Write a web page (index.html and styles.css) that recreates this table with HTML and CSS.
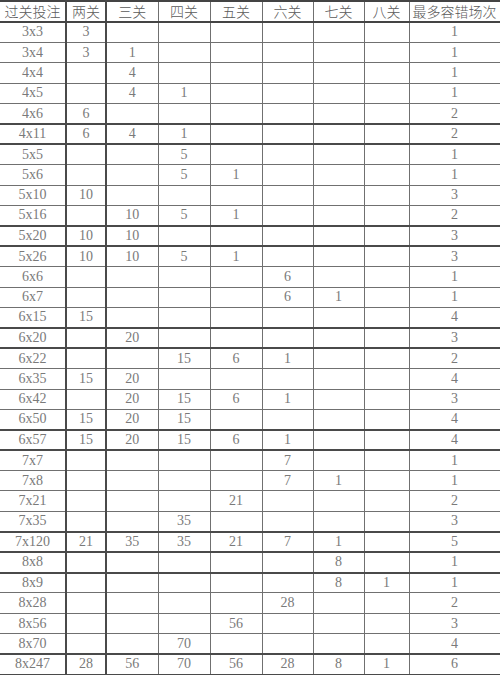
FILE: index.html
```html
<!DOCTYPE html>
<html lang="zh">
<head>
<meta charset="utf-8">
<title>过关投注</title>
<link rel="stylesheet" href="styles.css">
</head>
<body>
<table class="grid">
<colgroup>
<col class="c0"><col class="c1"><col class="c2"><col class="c3"><col class="c4"><col class="c5"><col class="c6"><col class="c7"><col class="c8">
</colgroup>
<thead>
<tr class="head"><th>过关投注</th><th>两关</th><th>三关</th><th>四关</th><th>五关</th><th>六关</th><th>七关</th><th>八关</th><th>最多容错场次</th></tr>
</thead>
<tbody>
<tr><td>3x3</td><td>3</td><td></td><td></td><td></td><td></td><td></td><td></td><td>1</td></tr>
<tr><td>3x4</td><td>3</td><td>1</td><td></td><td></td><td></td><td></td><td></td><td>1</td></tr>
<tr><td>4x4</td><td></td><td>4</td><td></td><td></td><td></td><td></td><td></td><td>1</td></tr>
<tr><td>4x5</td><td></td><td>4</td><td>1</td><td></td><td></td><td></td><td></td><td>1</td></tr>
<tr><td>4x6</td><td>6</td><td></td><td></td><td></td><td></td><td></td><td></td><td>2</td></tr>
<tr class="thick"><td>4x11</td><td>6</td><td>4</td><td>1</td><td></td><td></td><td></td><td></td><td>2</td></tr>
<tr><td>5x5</td><td></td><td></td><td>5</td><td></td><td></td><td></td><td></td><td>1</td></tr>
<tr><td>5x6</td><td></td><td></td><td>5</td><td>1</td><td></td><td></td><td></td><td>1</td></tr>
<tr><td>5x10</td><td>10</td><td></td><td></td><td></td><td></td><td></td><td></td><td>3</td></tr>
<tr><td>5x16</td><td></td><td>10</td><td>5</td><td>1</td><td></td><td></td><td></td><td>2</td></tr>
<tr class="thick"><td>5x20</td><td>10</td><td>10</td><td></td><td></td><td></td><td></td><td></td><td>3</td></tr>
<tr><td>5x26</td><td>10</td><td>10</td><td>5</td><td>1</td><td></td><td></td><td></td><td>3</td></tr>
<tr><td>6x6</td><td></td><td></td><td></td><td></td><td>6</td><td></td><td></td><td>1</td></tr>
<tr><td>6x7</td><td></td><td></td><td></td><td></td><td>6</td><td>1</td><td></td><td>1</td></tr>
<tr><td>6x15</td><td>15</td><td></td><td></td><td></td><td></td><td></td><td></td><td>4</td></tr>
<tr class="thick"><td>6x20</td><td></td><td>20</td><td></td><td></td><td></td><td></td><td></td><td>3</td></tr>
<tr><td>6x22</td><td></td><td></td><td>15</td><td>6</td><td>1</td><td></td><td></td><td>2</td></tr>
<tr><td>6x35</td><td>15</td><td>20</td><td></td><td></td><td></td><td></td><td></td><td>4</td></tr>
<tr><td>6x42</td><td></td><td>20</td><td>15</td><td>6</td><td>1</td><td></td><td></td><td>3</td></tr>
<tr><td>6x50</td><td>15</td><td>20</td><td>15</td><td></td><td></td><td></td><td></td><td>4</td></tr>
<tr class="thick"><td>6x57</td><td>15</td><td>20</td><td>15</td><td>6</td><td>1</td><td></td><td></td><td>4</td></tr>
<tr><td>7x7</td><td></td><td></td><td></td><td></td><td>7</td><td></td><td></td><td>1</td></tr>
<tr><td>7x8</td><td></td><td></td><td></td><td></td><td>7</td><td>1</td><td></td><td>1</td></tr>
<tr><td>7x21</td><td></td><td></td><td></td><td>21</td><td></td><td></td><td></td><td>2</td></tr>
<tr><td>7x35</td><td></td><td></td><td>35</td><td></td><td></td><td></td><td></td><td>3</td></tr>
<tr class="thick"><td>7x120</td><td>21</td><td>35</td><td>35</td><td>21</td><td>7</td><td>1</td><td></td><td>5</td></tr>
<tr class="thick-bottom"><td>8x8</td><td></td><td></td><td></td><td></td><td></td><td>8</td><td></td><td>1</td></tr>
<tr><td>8x9</td><td></td><td></td><td></td><td></td><td></td><td>8</td><td>1</td><td>1</td></tr>
<tr><td>8x28</td><td></td><td></td><td></td><td></td><td>28</td><td></td><td></td><td>2</td></tr>
<tr><td>8x56</td><td></td><td></td><td></td><td>56</td><td></td><td></td><td></td><td>3</td></tr>
<tr><td>8x70</td><td></td><td></td><td>70</td><td></td><td></td><td></td><td></td><td>4</td></tr>
<tr class="thick"><td>8x247</td><td>28</td><td>56</td><td>70</td><td>56</td><td>28</td><td>8</td><td>1</td><td>6</td></tr>
</tbody>
</table>
</body>
</html>
```

FILE: styles.css
```css
html, body {
  margin: 0;
  padding: 0;
  background: #ffffff;
}

.grid {
  width: 500px;
  table-layout: fixed;
  border-collapse: collapse;
  font-family: "Liberation Serif", "Noto Sans CJK SC", serif;
  color: #7a7a7a;
}

.c0 { width: 66px; }
.c1 { width: 40px; }
.c2 { width: 52px; }
.c3 { width: 52px; }
.c4 { width: 52px; }
.c5 { width: 51px; }
.c6 { width: 51px; }
.c7 { width: 45px; }
.c8 { width: 91px; }

.grid tr {
  height: 20.4px;
}

.grid tr.head {
  height: 21px;
}

.grid th,
.grid td {
  border: 1px solid #707070;
  padding: 0;
  text-align: center;
  vertical-align: middle;
  overflow: hidden;
  white-space: nowrap;
}

.grid th:first-child,
.grid td:first-child {
  border-left: none;
}

.grid th {
  font-family: "Noto Sans CJK SC", sans-serif;
  font-weight: 300;
  font-size: 14px;
  line-height: 15px;
  color: #5a5a5a;
  border-top: 2px solid #444444;
  border-bottom: 2px solid #444444;
}

.grid td {
  font-size: 14px;
  line-height: 14px;
}

.grid td:nth-child(1),
.grid th:nth-child(1),
.grid td:nth-child(2),
.grid th:nth-child(2) {
  border-right: 2px solid #4a4a4a;
}

.grid tr.thick td {
  border-top: 2px solid #4a4a4a;
  border-bottom: 2px solid #4a4a4a;
}

.grid tr.thick-bottom td {
  border-bottom: 2px solid #4a4a4a;
}
```
